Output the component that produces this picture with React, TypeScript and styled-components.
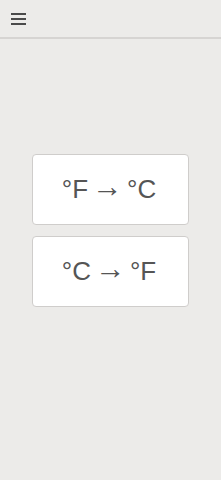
import * as React from 'react';
import styled, { createGlobalStyle } from 'styled-components';

const GlobalStyle = createGlobalStyle`
  html, body {
    margin: 0;
    padding: 0;
    background: #ecebe9;
    font-family: "Liberation Sans", Arial, sans-serif;
  }
`;

const Page = styled.div`
  display: flex;
  flex-direction: column;
  min-height: 480px;
`;

const Header = styled.header`
  height: 39px;
  border-bottom: 2px solid #d6d4d2;
  display: flex;
  align-items: center;
  padding-left: 11px;
  box-sizing: border-box;
`;

const MenuButton = styled.button`
  background: none;
  border: none;
  padding: 0;
  width: 15px;
  height: 12px;
  display: flex;
  flex-direction: column;
  justify-content: space-between;
  margin-top: 1px;
`;

const Bar = styled.span`
  display: block;
  height: 2px;
  background: #4a4a4a;
`;

const Main = styled.main`
  display: flex;
  flex-direction: column;
  align-items: center;
  gap: 11px;
  padding-top: 115px;
`;

const Choice = styled.button`
  width: 157px;
  height: 71px;
  background: #fff;
  border: 1px solid #cfcdcb;
  border-radius: 4px;
  font-family: "Liberation Sans", Arial, sans-serif;
  font-size: 26px;
  color: #555;
  display: flex;
  align-items: center;
  justify-content: center;
  gap: 4px;
  padding: 0 3px 0 0;
`;

const Arrow = styled.span`
  display: inline-block;
  font-family: "Liberation Sans", Arial, sans-serif;
  font-size: 31px;
  transform: translateY(-3px) scaleX(0.98);
`;

const conversions = [
  { from: '°F', to: '°C' },
  { from: '°C', to: '°F' }
];

const App: React.FC = () => (
  <Page>
    <GlobalStyle />
    <Header>
      <MenuButton aria-label="Menu">
        <Bar />
        <Bar />
        <Bar />
      </MenuButton>
    </Header>
    <Main>
      {conversions.map(c => (
        <Choice key={c.from}>
          <span>{c.from}</span>
          <Arrow>→</Arrow>
          <span>{c.to}</span>
        </Choice>
      ))}
    </Main>
  </Page>
);

export default App;
